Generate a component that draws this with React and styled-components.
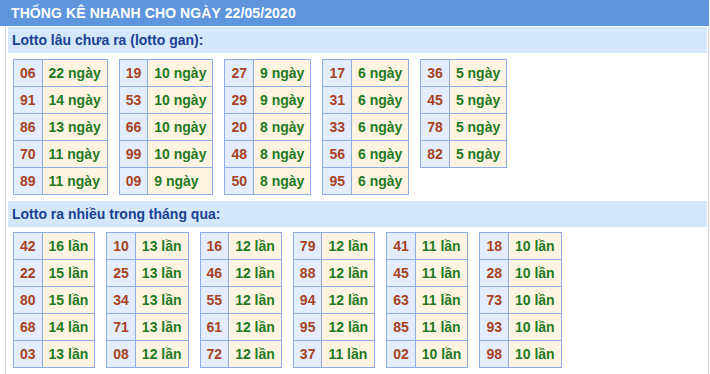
import styled, { createGlobalStyle } from 'styled-components';

const GlobalStyle = createGlobalStyle`
  body {
    margin: 0;
    background: #ffffff;
    font-family: 'Liberation Sans', Arial, sans-serif;
  }
`;

const ganData = [
	[['06', 22], ['91', 14], ['86', 13], ['70', 11], ['89', 11]],
	[['19', 10], ['53', 10], ['66', 10], ['99', 10], ['09', 9]],
	[['27', 9], ['29', 9], ['20', 8], ['48', 8], ['50', 8]],
	[['17', 6], ['31', 6], ['33', 6], ['56', 6], ['95', 6]],
	[['36', 5], ['45', 5], ['78', 5], ['82', 5]],
];

const nhieuData = [
	[['42', 16], ['22', 15], ['80', 15], ['68', 14], ['03', 13]],
	[['10', 13], ['25', 13], ['34', 13], ['71', 13], ['08', 12]],
	[['16', 12], ['46', 12], ['55', 12], ['61', 12], ['72', 12]],
	[['79', 12], ['88', 12], ['94', 12], ['95', 12], ['37', 11]],
	[['41', 11], ['45', 11], ['63', 11], ['85', 11], ['02', 10]],
	[['18', 10], ['28', 10], ['73', 10], ['93', 10], ['98', 10]],
];

function StatTable({rows, unit}){
	return(
		<Table>
			<tbody>
				{rows.map(([num, count]) => (
					<tr key={num}>
						<NumCell>{num}</NumCell>
						<ValueCell>{`${count} ${unit}`}</ValueCell>
					</tr>
				))}
			</tbody>
		</Table>
	);
}

export default function App(){
	return(
		<Page>
			<GlobalStyle/>
			<Header>THỐNG KÊ NHANH CHO NGÀY 22/05/2020</Header>
			<Box>
				<SubHeader>Lotto lâu chưa ra (lotto gan):</SubHeader>
				<TableRow>
					{ganData.map((rows, i) => <StatTable key={i} rows={rows} unit="ngày"/>)}
				</TableRow>
				<SubHeader>Lotto ra nhiều trong tháng qua:</SubHeader>
				<TableRow $last>
					{nhieuData.map((rows, i) => <StatTable key={i} rows={rows} unit="lần"/>)}
				</TableRow>
			</Box>
		</Page>
	);
}

const Page = styled.div`
  width: 709px;
`;

const Header = styled.div`
  height: 26px;
  line-height: 26px;
  padding-left: 11px;
  background: #5e95dc;
  color: #ffffff;
  font-weight: 700;
  font-size: 14px;
  letter-spacing: 0.1px;
`;

const Box = styled.div`
  box-sizing: border-box;
  margin-left: 5px;
  margin-top: 1px;
  width: 704px;
  min-height: 347px;
  border-left: 1px solid #cfcfcf;
  border-right: 1px solid #cfcfcf;
  padding: 0 1px 0 2px;
`;

const SubHeader = styled.div`
  height: 26px;
  line-height: 26px;
  padding-left: 4px;
  background: #d4e7fb;
  color: #1b3f93;
  font-weight: 700;
  font-size: 14px;
`;

const TableRow = styled.div`
  display: flex;
  align-items: flex-start;
  gap: 11px;
  padding: ${p => (p.$last ? '5px 0 6px 5px' : '6px 0 6px 5px')};
`;

const Table = styled.table`
  border-collapse: collapse;
  border: 1px solid #8eaee3;
  font-weight: 700;
  font-size: 14px;
`;

const Cell = styled.td`
  border: 1px solid #8eaee3;
  height: 26px;
  line-height: 26px;
  padding: 0 6px;
  white-space: nowrap;
`;

const NumCell = styled(Cell)`
  background: #e3edfd;
  color: #a8421f;
  text-align: center;
`;

const ValueCell = styled(Cell)`
  background: #fff4e2;
  color: #1e7a1e;
  text-align: left;
`;
